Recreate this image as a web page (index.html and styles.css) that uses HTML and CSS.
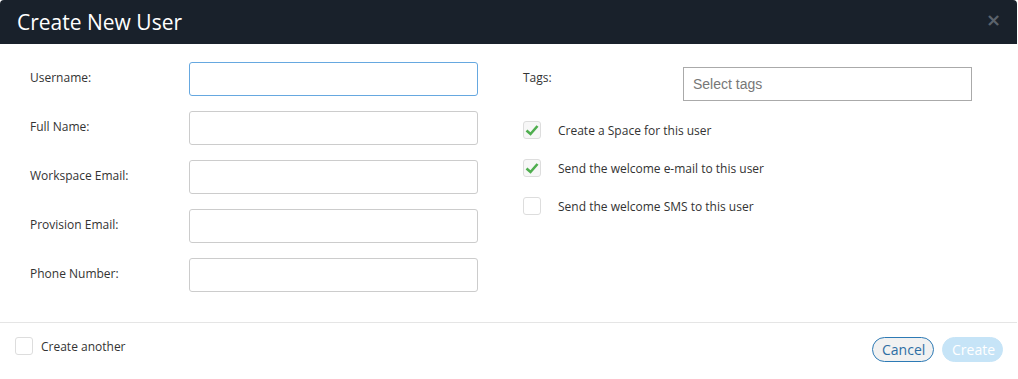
FILE: index.html
```html
<!DOCTYPE html>
<html lang="en">

<head>
    <meta charset="UTF-8">
    <meta name="viewport" content="width=device-width, initial-scale=1.0">
    <title>Create New User</title>
    <link rel="stylesheet" href="styles.css">
</head>

<body>
    <div class="modal">
        <div class="modal-header">
            <h1>Create New User</h1>
            <span class="close">&times;</span>
        </div>

        <div class="modal-body">
            <div class="col-left">
                <div class="row">
                    <label>Username:</label>
                    <input type="text" class="field focus">
                </div>
                <div class="row">
                    <label>Full Name:</label>
                    <input type="text" class="field">
                </div>
                <div class="row">
                    <label>Workspace Email:</label>
                    <input type="text" class="field">
                </div>
                <div class="row">
                    <label>Provision Email:</label>
                    <input type="text" class="field">
                </div>
                <div class="row">
                    <label>Phone Number:</label>
                    <input type="text" class="field">
                </div>
            </div>

            <div class="col-right">
                <div class="tags-row">
                    <label>Tags:</label>
                    <input type="text" class="tags" placeholder="Select tags">
                </div>
                <div class="check-row">
                    <span class="box checked">
                        <svg viewBox="0 0 18 18" width="18" height="18"><path d="M3.5 9.5 L7.5 13 L14.5 5" fill="none" stroke="#4fae4f" stroke-width="2.6" /></svg>
                    </span>
                    <span class="check-text">Create a Space for this user</span>
                </div>
                <div class="check-row">
                    <span class="box checked">
                        <svg viewBox="0 0 18 18" width="18" height="18"><path d="M3.5 9.5 L7.5 13 L14.5 5" fill="none" stroke="#4fae4f" stroke-width="2.6" /></svg>
                    </span>
                    <span class="check-text">Send the welcome e-mail to this user</span>
                </div>
                <div class="check-row">
                    <span class="box"></span>
                    <span class="check-text">Send the welcome SMS to this user</span>
                </div>
            </div>
        </div>

        <div class="modal-footer">
            <div class="another">
                <span class="box"></span>
                <span>Create another</span>
            </div>
            <div class="buttons">
                <button class="btn cancel">Cancel</button>
                <button class="btn create">Create</button>
            </div>
        </div>
    </div>
</body>

</html>
```

FILE: styles.css
```css
* {
    padding: 0;
    margin: 0;
    box-sizing: border-box;
}

body {
    background-color: #fff;
    font-family: "Open Sans", "Liberation Sans", sans-serif;
    color: #333;
}

.modal {
    width: 1017px;
    height: 379px;
    border-radius: 4px;
    overflow: hidden;
    display: flex;
    flex-direction: column;
}

.modal-header {
    height: 44px;
    background-color: #19212b;
    display: flex;
    align-items: center;
    justify-content: space-between;
    padding: 0 17px;
}

.modal-header h1 {
    font-size: 21px;
    font-weight: 400;
    color: #fff;
    line-height: 44px;
}

.close {
    color: #5b636c;
    font: 700 18px/1 "DejaVu Sans", sans-serif;
    margin-right: -1px;
    margin-top: -4px;
}

.modal-body {
    flex: 1;
    display: flex;
    padding: 18px 0 0 30px;
    border-bottom: 1px solid #e5e5e5;
}

.col-left {
    width: 448px;
    display: flex;
    flex-direction: column;
    gap: 15px;
}

.row {
    display: flex;
    align-items: center;
    height: 34px;
}

.row label {
    width: 159px;
    font-size: 12px;
    margin-top: -3px;
}

.field {
    width: 289px;
    height: 34px;
    border: 1px solid #ccc;
    border-radius: 3px;
    outline: none;
}

.field.focus {
    border-color: #66a8e0;
}

.col-right {
    margin-left: 45px;
    display: flex;
    flex-direction: column;
}

.tags-row {
    display: flex;
    height: 34px;
    margin-top: 5px;
    margin-bottom: 20px;
}

.tags-row label {
    width: 160px;
    font-size: 12px;
    margin-top: 2px;
}

.tags {
    width: 289px;
    height: 34px;
    border: 1px solid #aaa;
    padding-left: 9px;
    font: 14px "Liberation Sans", Arial, sans-serif;
    outline: none;
}

.tags::placeholder {
    color: #777;
}

.check-row {
    display: flex;
    align-items: center;
    height: 18px;
    margin-bottom: 20px;
    font-size: 12px;
}

.box {
    width: 18px;
    height: 18px;
    border: 1px solid #ddd;
    border-radius: 3px;
    display: inline-block;
    flex-shrink: 0;
    position: relative;
}

.box.checked {
    background-color: #f7f7f7;
}

.box svg {
    position: absolute;
    left: -1px;
    top: -1px;
}

.check-text {
    margin-left: 17px;
}

.modal-footer {
    height: 56px;
    display: flex;
    justify-content: space-between;
    align-items: center;
    padding: 0 14px 4px 15px;
}

.another {
    display: flex;
    align-items: center;
    gap: 8px;
    font-size: 12px;
    margin-top: -6px;
}

.buttons {
    display: flex;
    gap: 8px;
}

.btn {
    height: 25px;
    border-radius: 13px;
    font: 14px "Open Sans", sans-serif;
    padding: 0 9px;
}

.cancel {
    background-color: #f1f1f1;
    border: 1px solid #2d7ab5;
    color: #2d6ea4;
    width: 62px;
}

.create {
    background-color: #c6e4f7;
    border: 1px solid #c6e4f7;
    color: #fff;
    width: 61px;
}
```
